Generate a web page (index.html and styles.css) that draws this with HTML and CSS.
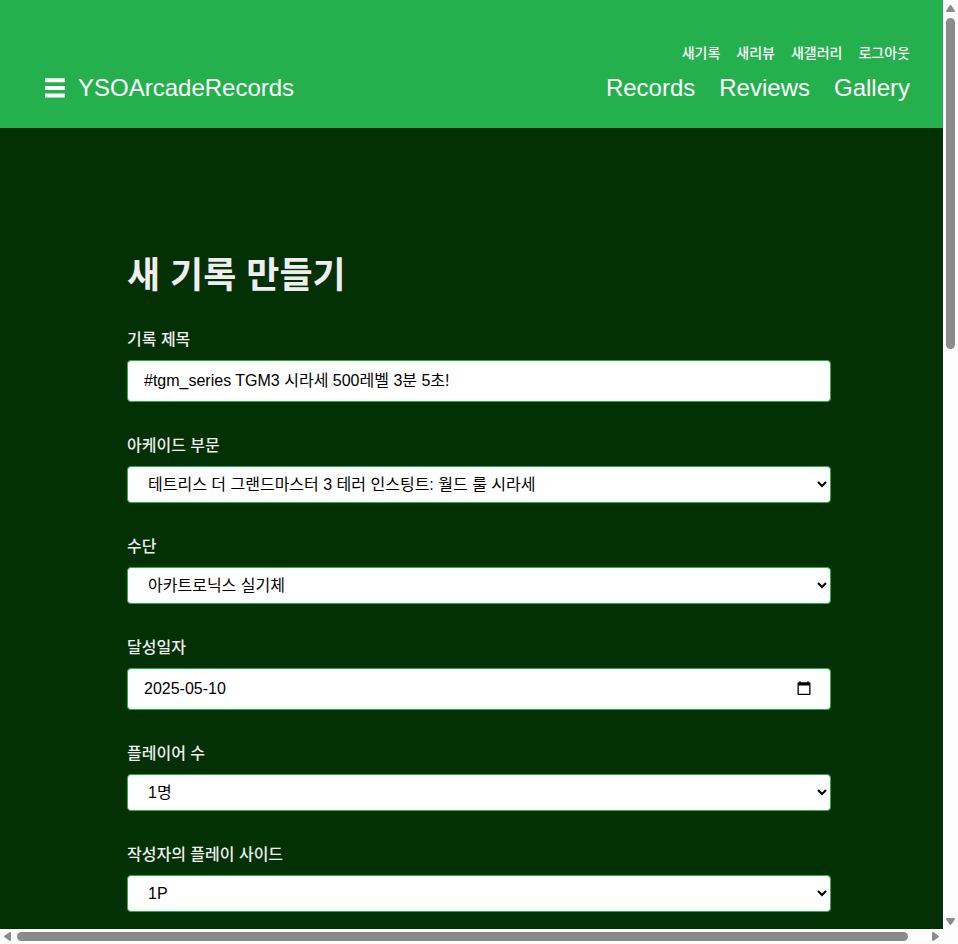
FILE: index.html
```html
<!DOCTYPE html>
<html lang="ko">
<head>
<meta charset="utf-8">
<meta name="viewport" content="width=device-width, initial-scale=1">
<title>YSOArcadeRecords</title>
<link rel="stylesheet" href="styles.css">
</head>
<body>
<div class="shell">
  <div class="view">
    <div class="page">
      <header class="header">
        <div class="brand">
          <button class="menu" type="button" aria-label="메뉴">
            <svg width="20" height="20" viewBox="0 0 20 20" aria-hidden="true"><path fill="currentColor" d="M0 .3h20v4H0zM0 7.9h20v4H0zM0 15.6h20v4H0z"/></svg>
          </button>
          <a class="logo" href="#">YSOArcadeRecords</a>
        </div>
        <div class="navs">
          <nav class="subnav">
            <a href="#">새기록</a>
            <a href="#">새리뷰</a>
            <a href="#">새갤러리</a>
            <a href="#">로그아웃</a>
          </nav>
          <nav class="mainnav">
            <a href="#">Records</a>
            <a href="#">Reviews</a>
            <a href="#">Gallery</a>
          </nav>
        </div>
      </header>
      <main class="main">
        <h1 class="title">새 기록 만들기</h1>
        <form class="form">
          <div class="field">
            <label for="title">기록 제목</label>
            <input class="control text" id="title" type="text" value="#tgm_series TGM3 시라세 500레벨 3분 5초!">
          </div>
          <div class="field">
            <label for="category">아케이드 부문</label>
            <select class="control select" id="category"><option>테트리스 더 그랜드마스터 3 테러 인스팅트: 월드 룰 시라세</option></select>
          </div>
          <div class="field">
            <label for="method">수단</label>
            <select class="control select" id="method"><option>아카트로닉스 실기체</option></select>
          </div>
          <div class="field">
            <label for="date">달성일자</label>
            <div class="datebox">
              <input class="control" id="date" type="text" value="2025-05-10">
              <button class="picker" type="button" aria-label="날짜 선택">
                <svg width="14" height="15" viewBox="0 0 14 15" aria-hidden="true"><path fill="currentColor" fill-rule="evenodd" d="M2.5 0h1v1.300h7V0h1v1.300h.8q1.200 0 1.200 1.200v10.300q0 1.200-1.200 1.200H1.700Q.5 14 .5 12.800V2.500q0-1.200 1.200-1.200h.8zM1.800 4.500v8.200h10.400V4.500z"/></svg>
              </button>
            </div>
          </div>
          <div class="field">
            <label for="players">플레이어 수</label>
            <select class="control select" id="players"><option>1명</option></select>
          </div>
          <div class="field">
            <label for="side">작성자의 플레이 사이드</label>
            <select class="control select" id="side"><option>1P</option></select>
          </div>
        </form>
      </main>
    </div>
  </div>
  <div class="bar bar-y" aria-hidden="true">
    <svg width="9" height="7" viewBox="0 0 9 7"><path d="M4.500 0Q5 0 5.500.8L8.800 5.500Q9.300 7 8 7H1Q-.3 7 .2 5.500L3.500.8Q4 0 4.500 0z"/></svg>
    <div class="track"><div class="thumb"></div></div>
    <svg width="9" height="7" viewBox="0 0 9 7"><path d="M4.500 7Q5 7 5.500 6.200L8.800 1.500Q9.300 0 8 0H1Q-.3 0 .2 1.500L3.500 6.200Q4 7 4.500 7z"/></svg>
  </div>
  <div class="bar bar-x" aria-hidden="true">
    <svg width="7" height="9" viewBox="0 0 7 9"><path d="M0 4.500Q0 4 .8 3.500L5.500.2Q7-.3 7 1V8Q7 9.300 5.500 8.800L.8 5.500Q0 5 0 4.500z"/></svg>
    <div class="track"><div class="thumb"></div></div>
    <svg width="7" height="9" viewBox="0 0 7 9"><path d="M7 4.500Q7 4 6.200 3.500L1.500.2Q0-.3 0 1V8Q0 9.300 1.500 8.800L6.200 5.500Q7 5 7 4.500z"/></svg>
  </div>
</div>
</body>
</html>
```
FILE: styles.css
```css
* { box-sizing: border-box; }

body {
  margin: 0;
  background: #fcfcfc;
  color: #eee;
  font-family: "Liberation Sans", "Noto Sans CJK KR", sans-serif;
  font-size: 16px;
  line-height: 24px;
}

a { color: inherit; text-decoration: none; }

/* Content area with a scrollbar on the right and at the bottom */
.shell {
  display: grid;
  grid-template: minmax(0, 1fr) 15px / minmax(0, 1fr) 15px;
  height: 100vh;
}

.view { overflow: hidden; background: #033004; }
.page { width: 100vw; }

.header {
  display: flex;
  justify-content: space-between;
  align-items: flex-end;
  padding: 40px 48px 22px 45px;
  background: #24b14d;
  color: #fff;
}

.brand { display: flex; align-items: center; gap: 13px; }

.menu, .picker {
  display: flex;
  padding: 0;
  border: 0;
  background: none;
  color: inherit;
}

.logo, .mainnav { font-size: 24px; line-height: 36px; }

.subnav {
  display: flex;
  justify-content: flex-end;
  gap: 16px;
  margin-bottom: 4px;
  font-size: 14px;
  line-height: 26px;
  font-weight: 500;
}

.mainnav { display: flex; justify-content: flex-end; gap: 24px; }

.main { max-width: 704px; margin: 0 auto; padding: 121px 0 48px; }

.title {
  margin: 0 0 25px;
  font-size: 36px;
  line-height: 54px;
}

.form { display: grid; gap: 32px; }
.field { display: grid; gap: 8px; }
.field label { font-weight: 500; }

.control {
  width: 100%;
  height: 42px;
  padding: 0 16px;
  border: 1px solid #24b14d;
  border-radius: 4px;
  background: #fff;
  color: #000;
  font: inherit;
}

.text { padding-bottom: 4px; }
.select { height: 37px; }

.datebox { position: relative; }
.picker {
  position: absolute;
  top: 13px;
  right: 20px;
  color: #000;
}

.bar { display: flex; align-items: center; gap: 6px; fill: #8b8b8b; }
.bar-y { flex-direction: column; padding: 5px 0 4px; }
.bar-x { padding: 0 4px; }
.track { flex: 1; }
.thumb { border-radius: 5px; background: #8b8b8b; }
.bar-y .thumb { width: 9px; height: 37%; }
.bar-x .thumb { width: 98%; height: 9px; }
```
